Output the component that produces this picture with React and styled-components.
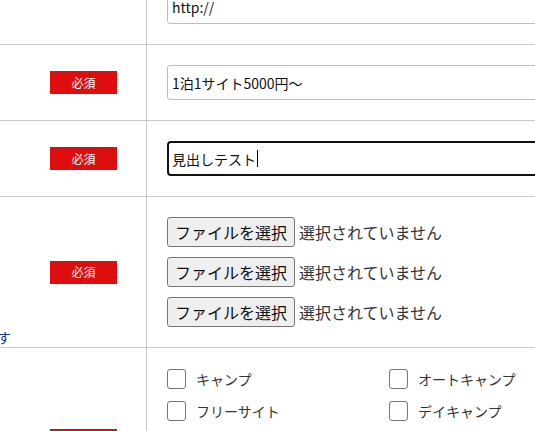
import React from "react";
import styled, { createGlobalStyle } from "styled-components";

const GlobalStyle = createGlobalStyle`
  html, body {
    margin: 0;
    padding: 0;
    overflow: hidden;
    background: #fff;
  }
  body {
    font-family: "Noto Sans CJK JP", "Noto Sans", sans-serif;
    color: #222;
  }
`;

const Form = styled.div`
  width: 760px;
  margin-top: -31px;
`;

const Row = styled.div`
  display: grid;
  grid-template-columns: 147px 1fr;
  border-bottom: 1px solid #c6c6c6;
`;

const Label = styled.div`
  border-right: 1px solid #c6c6c6;
  display: grid;
  grid-template-columns: minmax(0, 1fr);
  grid-template-rows: 1fr auto 1fr;
  justify-items: end;
  align-items: center;
  padding-right: 29px;
  min-width: 0;
`;

const Required = styled.span`
  grid-row: 2;
  display: flex;
  align-items: center;
  justify-content: center;
  width: 67px;
  height: 23px;
  background: #df0e0e;
  color: #fff;
  font-size: 12px;
  line-height: 1;
`;

const Note = styled.div`
  grid-row: 3;
  align-self: end;
  justify-self: stretch;
  min-width: 0;
  display: flex;
  justify-content: flex-end;
  margin-right: 106px;
  white-space: nowrap;
  font-size: 14px;
  line-height: 20px;
  color: #16388a;
`;

const Field = styled.div`
  padding: 20px 20px;
  display: flex;
  flex-direction: column;
  gap: 10px;
`;

const TextInput = styled.input`
  box-sizing: border-box;
  width: 520px;
  height: 35px;
  border: 1px solid #bdbdbd;
  border-radius: 3px;
  padding: 0 4px;
  font-family: inherit;
  font-size: 14px;
  color: #111;
  background: #fff;
  outline: none;
`;

const ActiveInput = styled.div`
  box-sizing: border-box;
  width: 520px;
  height: 35px;
  border: 2px solid #121212;
  border-radius: 4px;
  padding: 0 3px;
  display: flex;
  align-items: center;
  font-size: 14px;
  color: #111;
`;

const Caret = styled.span`
  display: inline-block;
  width: 1px;
  height: 17px;
  margin-left: 1px;
  background: #000;
`;

const FileRow = styled.div`
  display: flex;
  align-items: center;
  height: 30px;
  gap: 4px;
  font-size: 16px;
`;

const FileButton = styled.button`
  box-sizing: border-box;
  width: 128px;
  height: 30px;
  padding: 0;
  border: 1px solid #767676;
  border-radius: 3px;
  background: #efefef;
  font-family: inherit;
  font-size: 16px;
  color: #111;
`;

const FileStatus = styled.span`
  color: #333;
`;

const CheckGrid = styled.div`
  display: grid;
  grid-template-columns: 222px 222px;
  row-gap: 12px;
  padding-top: 1px;
`;

const CheckItem = styled.label`
  display: flex;
  align-items: center;
  gap: 10px;
  height: 20px;
  font-size: 14px;
  color: #333;
`;

const Box = styled.input`
  appearance: none;
  box-sizing: border-box;
  margin: 0;
  width: 19px;
  height: 20px;
  border: 1px solid #767676;
  border-radius: 3px;
  background: #fff;
`;

const ChoiceField = styled(Field)`
  padding-bottom: 16px;
`;

const types = [
  "キャンプ",
  "オートキャンプ",
  "フリーサイト",
  "デイキャンプ",
  "グランピング",
  "コテージ",
  "バンガロー",
  "トレーラーハウス",
  "貸切サイト",
  "ペット可",
];

export default function App() {
  return (
    <>
      <GlobalStyle />
      <Form>
        <Row>
          <Label />
          <Field>
            <TextInput defaultValue="http://" />
          </Field>
        </Row>
        <Row>
          <Label>
            <Required>必須</Required>
          </Label>
          <Field>
            <TextInput defaultValue="1泊1サイト5000円〜" />
          </Field>
        </Row>
        <Row>
          <Label>
            <Required>必須</Required>
          </Label>
          <Field>
            <ActiveInput>
              見出しテスト
              <Caret />
            </ActiveInput>
          </Field>
        </Row>
        <Row>
          <Label>
            <Required>必須</Required>
            <Note>※画像は3枚まで登録できます</Note>
          </Label>
          <Field>
            {[0, 1, 2].map((i) => (
              <FileRow key={i}>
                <FileButton type="button">ファイルを選択</FileButton>
                <FileStatus>選択されていません</FileStatus>
              </FileRow>
            ))}
          </Field>
        </Row>
        <Row>
          <Label>
            <Required>必須</Required>
          </Label>
          <ChoiceField>
            <CheckGrid>
              {types.map((t) => (
                <CheckItem key={t}>
                  <Box type="checkbox" />
                  {t}
                </CheckItem>
              ))}
            </CheckGrid>
          </ChoiceField>
        </Row>
      </Form>
    </>
  );
}
